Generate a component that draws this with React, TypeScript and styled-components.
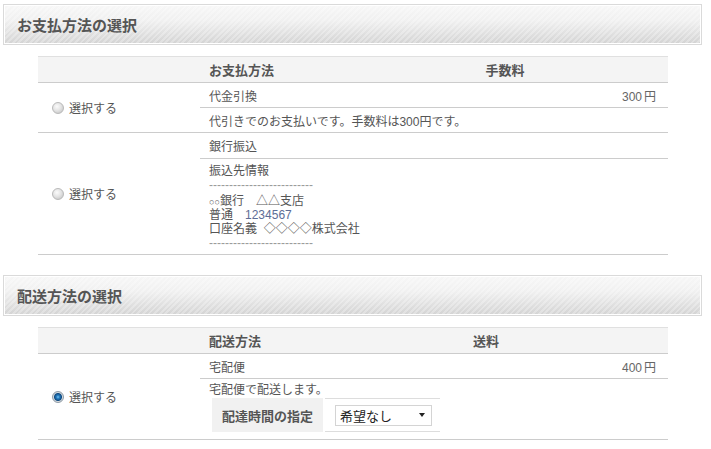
import React from "react";
import styled, { createGlobalStyle, css } from "styled-components";

const DASHES = "-".repeat(26);

export default function App() {
    return (
        <>
            <GlobalStyle />
            <Page>
                <Heading>お支払方法の選択</Heading>
                <Table>
                    <HeaderRow $mid={142}>
                        <span />
                        <HeadCell>お支払方法</HeadCell>
                        <HeadCell $center>手数料</HeadCell>
                    </HeaderRow>
                    <Group>
                        <RadioCell>
                            <Radio />
                            選択する
                        </RadioCell>
                        <Details>
                            <Line>
                                <span>代金引換</span>
                                <Price>
                                    300<Yen>円</Yen>
                                </Price>
                            </Line>
                            <Line>代引きでのお支払いです。手数料は300円です。</Line>
                        </Details>
                    </Group>
                    <Group>
                        <RadioCell>
                            <Radio />
                            選択する
                        </RadioCell>
                        <Details>
                            <Line $tall>銀行振込</Line>
                            <InfoBlock>
                                <InfoLine>振込先情報</InfoLine>
                                <InfoLine $dash>{DASHES}</InfoLine>
                                <Spacer />
                                <InfoLine>
                                    <Small>○○</Small>銀行　△△支店
                                </InfoLine>
                                <InfoLine>
                                    普通　<Account>1234567</Account>
                                </InfoLine>
                                <InfoLine>口座名義&nbsp;&nbsp;◇◇◇◇株式会社</InfoLine>
                                <InfoLine $dash>{DASHES}</InfoLine>
                            </InfoBlock>
                        </Details>
                    </Group>
                </Table>

                <Heading $gap>配送方法の選択</Heading>
                <Table>
                    <HeaderRow $mid={104}>
                        <span />
                        <HeadCell>配送方法</HeadCell>
                        <HeadCell $center>送料</HeadCell>
                    </HeaderRow>
                    <Group>
                        <RadioCell>
                            <Radio $checked />
                            選択する
                        </RadioCell>
                        <Details>
                            <Line>
                                <span>宅配便</span>
                                <Price>
                                    400<Yen>円</Yen>
                                </Price>
                            </Line>
                            <DeliveryBlock>
                                <DeliveryText>宅配便で配送します。</DeliveryText>
                                <TimeRow>
                                    <TimeLabel>配達時間の指定</TimeLabel>
                                    <TimeField>
                                        <SelectBox>
                                            希望なし
                                            <Arrow />
                                        </SelectBox>
                                    </TimeField>
                                </TimeRow>
                            </DeliveryBlock>
                        </Details>
                    </Group>
                </Table>
            </Page>
        </>
    );
}

const GlobalStyle = createGlobalStyle`
    body {
        margin: 0;
        background: #fff;
        font-family: "Liberation Sans", "Noto Sans CJK JP", sans-serif;
        font-size: 12px;
        color: #555;
    }
    * {
        box-sizing: border-box;
    }
`;

const Page = styled.div`
    width: 702px;
    padding: 4px 0 0 3px;
`;

const Heading = styled.h2<{ $gap?: boolean }>`
    margin: ${(p) => (p.$gap ? "20px" : "0")} 0 0;
    height: 41px;
    display: flex;
    align-items: center;
    padding-left: 13px;
    border: 1px solid #dadada;
    box-shadow: inset 0 0 0 1px #fff;
    background:
        repeating-linear-gradient(
            135deg,
            rgba(255, 255, 255, 0.28) 0 2px,
            rgba(255, 255, 255, 0) 2px 4px
        ),
        linear-gradient(#f7f7f7 0%, #f0f0f0 40%, #d3d3d3 100%);
    font-size: 15px;
    font-weight: bold;
    color: #555;
`;

const Table = styled.div`
    width: 630px;
    margin: 11px 0 0 35px;
    border-top: 1px solid #e0e0e0;
`;

const HeaderRow = styled.div<{ $mid: number }>`
    display: grid;
    grid-template-columns: 162px ${(p) => p.$mid}px 1fr;
    align-items: center;
    height: 26px;
    background: #f4f4f4;
    border-bottom: 1px solid #cccccc;
    font-size: 13px;
    font-weight: bold;
    color: #555;
`;

const HeadCell = styled.span<{ $center?: boolean }>`
    padding-left: ${(p) => (p.$center ? "0" : "9px")};
    text-align: ${(p) => (p.$center ? "center" : "left")};
`;

const Group = styled.div`
    display: flex;
    border-bottom: 1px solid #cccccc;
`;

const RadioCell = styled.div`
    width: 162px;
    flex-shrink: 0;
    display: flex;
    align-items: center;
    gap: 5px;
    padding-left: 14px;
`;

const Radio = styled.span<{ $checked?: boolean }>`
    width: 12px;
    height: 12px;
    border-radius: 50%;
    border: 1px solid #b9b9b9;
    background: radial-gradient(circle at 40% 35%, #fbfbfb 0, #e4e4e4 45%, #bdbdbd 100%);
    ${(p) =>
        p.$checked &&
        css`
            border-color: #8f9ba6;
            background: radial-gradient(
                circle at 50% 50%,
                #7cc4f0 0,
                #2a82c4 1.5px,
                #0e4a82 3.5px,
                #d9dde0 4.5px,
                #aeb4ba 100%
            );
        `}
`;

const Details = styled.div`
    flex: 1;
    display: flex;
    flex-direction: column;
`;

const Line = styled.div<{ $tall?: boolean }>`
    height: ${(p) => (p.$tall ? "25px" : "24px")};
    display: flex;
    align-items: center;
    justify-content: space-between;
    padding: 0 12px 0 9px;

    & + & {
        border-top: 1px solid #cccccc;
        height: 25px;
    }
`;

const Price = styled.span`
    color: #666;
`;

const Yen = styled.span`
    margin-left: 2px;
`;

const InfoBlock = styled.div`
    border-top: 1px solid #cccccc;
    padding: 5px 9px;
    height: 96px;
`;

const InfoLine = styled.div<{ $dash?: boolean }>`
    line-height: 14px;
    height: 14px;
    white-space: nowrap;
    color: ${(p) => (p.$dash ? "#9a9a9a" : "#555")};
`;

const Spacer = styled.div`
    height: 2px;
`;

const Small = styled.span`
    font-size: 9px;
`;

const Account = styled.span`
    color: #5d6d96;
`;

const DeliveryBlock = styled.div`
    border-top: 1px solid #cccccc;
    padding: 4px 9px 8px;
    height: 61px;
`;

const DeliveryText = styled.div`
    line-height: 15px;
    height: 15px;
`;

const TimeRow = styled.div`
    display: flex;
    gap: 2px;
    height: 34px;
    margin-left: 3px;
`;

const TimeLabel = styled.div`
    width: 111px;
    display: flex;
    align-items: center;
    justify-content: center;
    background: #f1f1f1;
    font-size: 13px;
    font-weight: bold;
    color: #555;
`;

const TimeField = styled.div`
    width: 115px;
    display: flex;
    align-items: center;
    padding-left: 10px;
    border-top: 1px solid #dddddd;
    border-bottom: 1px solid #dddddd;
`;

const SelectBox = styled.div`
    width: 97px;
    height: 21px;
    display: flex;
    align-items: center;
    justify-content: space-between;
    padding: 0 6px 0 4px;
    border: 1px solid #d4d4d4;
    background: #fff;
    color: #222;
    font-size: 13px;
`;

const Arrow = styled.span`
    width: 0;
    height: 0;
    border-left: 3.5px solid transparent;
    border-right: 3.5px solid transparent;
    border-top: 4px solid #222;
`;
